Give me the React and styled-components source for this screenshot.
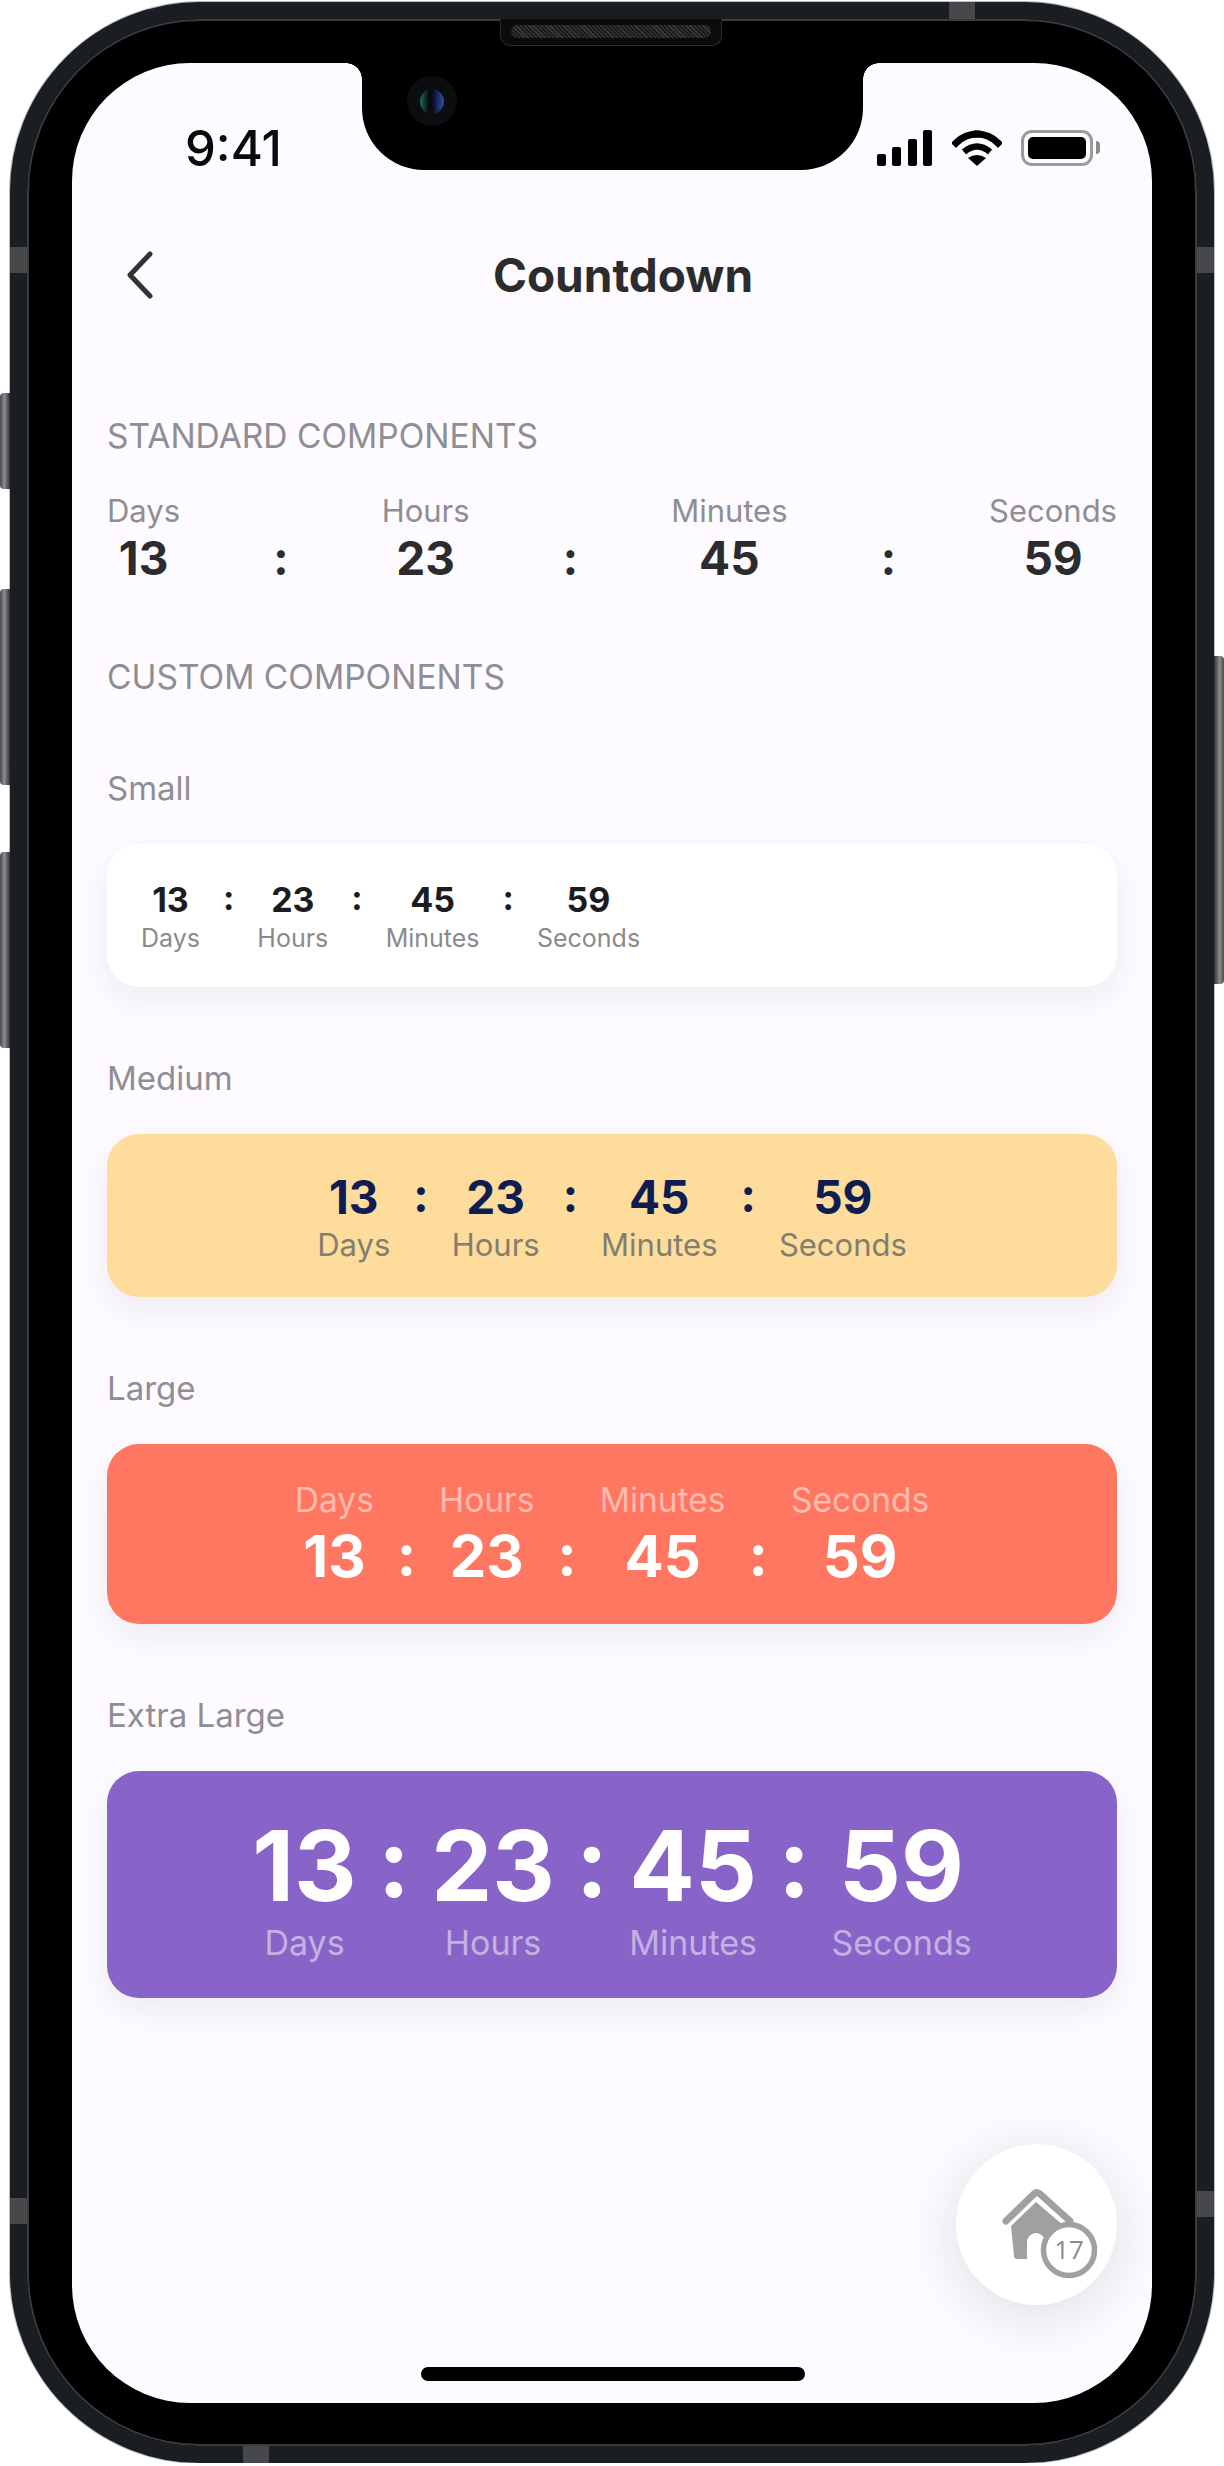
import React from 'react'
import styled, { createGlobalStyle, css } from 'styled-components'

const UNITS = [
  ['Days', '13'],
  ['Hours', '23'],
  ['Minutes', '45'],
  ['Seconds', '59'],
]

const SIZES = {
  standard: { num: 46, label: 31, numLh: 54, labelLh: 40, gap: 0, lift: 0, numColor: '#2c2c2e', labelColor: '#8e8e93' },
  small: { num: 34, label: 25, numLh: 44, labelLh: 32, gap: 23, lift: 2, numColor: '#1c1c1e', labelColor: '#8a8a8e' },
  medium: { num: 46, label: 31, numLh: 57, labelLh: 37, gap: 23, lift: 2, numColor: '#0f1d52', labelColor: '#827f70' },
  large: { num: 58, label: 33.5, numLh: 68, labelLh: 44, gap: 23, lift: 2, numColor: '#ffffff', labelColor: 'rgba(255,255,255,.5)' },
  xlarge: { num: 97, label: 34, numLh: 116, labelLh: 38, gap: 21, lift: 4, numColor: '#ffffff', labelColor: 'rgba(255,255,255,.5)' },
}

function Timer({ size, labelsFirst }) {
  const s = SIZES[size]
  return (
    <TimerRow $gap={s.gap} $labelsFirst={labelsFirst}>
      {UNITS.map(([label, value], i) => (
        <React.Fragment key={label}>
          {i > 0 && <Colon $s={s}>:</Colon>}
          <Unit $labelsFirst={labelsFirst}>
            <Value $s={s}>{value}</Value>
            <Label $s={s}>{label}</Label>
          </Unit>
        </React.Fragment>
      ))}
    </TimerRow>
  )
}

function HomeIcon() {
  return (
    <svg width="120" height="110" viewBox="0 0 120 110">
      <path d="M29 51 L57 24 Q60 21 63 24 L93 51" fill="none" stroke="#a0a0a0" strokeWidth="7" strokeLinecap="round" strokeLinejoin="round" />
      <path d="M59 32 L86 55 L86 89 L68 89 L68 72 A9 9 0 0 0 50 72 L50 89 L40 89 Q37 89 37 86 L34 56 Z" fill="#a0a0a0" />
      <circle cx="92" cy="80" r="25.500" fill="#fff" stroke="#a0a0a0" strokeWidth="5.500" />
      <text x="92" y="89" textAnchor="middle" fontFamily="'Open Sans', sans-serif" fontSize="26" fill="#8a8a8a">17</text>
    </svg>
  )
}

function App() {
  return (
    <>
      <GlobalStyle />
      <Device>
        <ButtonRail $side="left">
          <SideButton $side="left" $height={96} $apart />
          <SideButton $side="left" $height={196} />
          <SideButton $side="left" $height={196} />
        </ButtonRail>
        <ButtonRail $side="right">
          <SideButton $side="right" $height={328} />
        </ButtonRail>
        <BandMark $side="left" $upper />
        <BandMark $side="left" />
        <BandMark $side="right" $upper />
        <BandMark $side="right" />
        <BandMark $side="top" />
        <BandMark $side="bottom" />
        <Speaker><Grill /></Speaker>
        <Screen>
          <Notch>
            <CornerLeft />
            <CornerRight />
            <Camera />
          </Notch>
          <StatusBar>
            <Clock>9:41</Clock>
            <StatusIcons>
              <svg width="56" height="36" viewBox="0 0 56 36">
                <rect x="0" y="24" width="9" height="12" rx="2" />
                <rect x="15" y="17" width="9" height="19" rx="2" />
                <rect x="31" y="9" width="9" height="27" rx="2" />
                <rect x="46" y="0" width="9" height="36" rx="2" />
              </svg>
              <svg width="50" height="38" viewBox="0 0 50 38">
                <path d="M25 5 C 34 5 41 9 46 14" fill="none" stroke="#000" strokeWidth="7" strokeLinecap="square" />
                <path d="M25 5 C 16 5 9 9 4 14" fill="none" stroke="#000" strokeWidth="7" strokeLinecap="square" />
                <path d="M12 23 Q25 12 38 23" fill="none" stroke="#000" strokeWidth="6.500" />
                <path d="M25 37 L16 29 Q25 23 34 29 Z" />
              </svg>
              <Battery><BatteryFill /></Battery>
            </StatusIcons>
          </StatusBar>
          <NavBar>
            <BackIcon width="28" height="48" viewBox="0 0 28 48">
              <path d="M24 3 L4 24 L24 45" fill="none" stroke="#333" strokeWidth="5" strokeLinecap="round" strokeLinejoin="round" />
            </BackIcon>
            <Title>Countdown</Title>
          </NavBar>
          <SectionTitle $first>STANDARD COMPONENTS</SectionTitle>
          <StandardRow>
            <Timer size="standard" labelsFirst />
          </StandardRow>
          <SectionTitle>CUSTOM COMPONENTS</SectionTitle>
          <Groups>
            <Group>
              <Caption>Small</Caption>
              <Card $bg="#ffffff" $height={143}>
                <SmallInset><Timer size="small" /></SmallInset>
              </Card>
            </Group>
            <Group>
              <Caption>Medium</Caption>
              <Card $bg="#fddc9c" $height={163}>
                <Timer size="medium" />
              </Card>
            </Group>
            <Group>
              <Caption>Large</Caption>
              <Card $bg="#ff7760" $height={180}>
                <Timer size="large" labelsFirst />
              </Card>
            </Group>
            <Group>
              <Caption>Extra Large</Caption>
              <Card $bg="#8864c8" $height={227}>
                <Timer size="xlarge" />
              </Card>
            </Group>
          </Groups>
          <Fab><HomeIcon /></Fab>
          <HomeIndicator />
        </Screen>
      </Device>
    </>
  )
}

const GlobalStyle = createGlobalStyle`
  html, body {
    margin: 0;
    padding: 0;
    background: #ffffff;
  }
  body {
    font-family: Inter, "Liberation Sans", sans-serif;
  }
`

const Device = styled.div`
  position: relative;
  box-sizing: border-box;
  width: 1204px;
  height: 2461px;
  margin: 2px 0 0 10px;
  padding: 44px 45px;
  background: #000;
  border: 17px solid #1a1d22;
  border-radius: 190px;
  box-shadow: 0 0 0 1px #b9bcc0, inset 0 0 0 2px #3a3b3d;
`

const ButtonRail = styled.div`
  position: absolute;
  ${p => (p.$side === 'left' ? 'left: -27px; top: 374px;' : 'right: -27px; top: 637px;')}
  display: flex;
  flex-direction: column;
  gap: 67px;
`

const SideButton = styled.div`
  width: 10px;
  height: ${p => p.$height}px;
  margin-bottom: ${p => (p.$apart ? '33px' : '0')};
  background: linear-gradient(${p => (p.$side === 'left' ? '90deg' : '270deg')}, #4a4a4c, #8b8b8d 45%, #2c2c2e);
  border-radius: ${p => (p.$side === 'left' ? '4px 0 0 4px' : '0 4px 4px 0')};
`

const bandSpots = {
  left: p => `left: -17px; width: 17px; height: 26px; top: ${p.$upper ? '228px' : '2179px'};`,
  right: p => `right: -17px; width: 17px; height: 26px; top: ${p.$upper ? '228px' : '2172px'};`,
  top: () => 'top: -17px; left: 922px; width: 26px; height: 17px;',
  bottom: () => 'bottom: -17px; left: 216px; width: 26px; height: 17px;',
}

const BandMark = styled.div`
  position: absolute;
  ${p => bandSpots[p.$side](p)}
  background: #47484a;
`

const Speaker = styled.div`
  position: absolute;
  z-index: 3;
  top: 0;
  left: 473px;
  box-sizing: border-box;
  width: 222px;
  height: 27px;
  padding: 6px 10px 0;
  background: #0b0b0c;
  border: 1px solid #2b2b2d;
  border-top: none;
  border-radius: 0 0 10px 10px;
`

const Grill = styled.div`
  height: 13px;
  border-radius: 7px;
  background: repeating-linear-gradient(45deg, #3a3a3c 0 1px, #1e1e20 1px 3px);
`

const Screen = styled.div`
  position: relative;
  box-sizing: border-box;
  width: 1080px;
  height: 2340px;
  padding: 0 35px;
  background: #fdfbff;
  border-radius: 118px;
  overflow: hidden;
`

const Notch = styled.div`
  position: absolute;
  top: 0;
  left: 290px;
  width: 501px;
  height: 107px;
  background: #000;
  border-radius: 0 0 62px 62px;
`

const corner = css`
  position: absolute;
  top: 0;
  width: 16px;
  height: 16px;
`

const CornerLeft = styled.div`
  ${corner}
  left: -16px;
  background: radial-gradient(circle at 0 100%, transparent 15.500px, #000 16px);
`

const CornerRight = styled.div`
  ${corner}
  right: -16px;
  background: radial-gradient(circle at 100% 100%, transparent 15.500px, #000 16px);
`

const Camera = styled.div`
  position: absolute;
  top: 13px;
  left: 45px;
  display: flex;
  align-items: center;
  justify-content: center;
  width: 50px;
  height: 50px;
  border-radius: 50%;
  background: #0d0d10;

  &::after {
    content: '';
    width: 24px;
    height: 25px;
    border-radius: 50%;
    background: linear-gradient(90deg, #1d6a62, #05090c 38%, #0a0f22 55%, #2f4fae);
  }
`

const StatusBar = styled.div`
  display: flex;
  justify-content: space-between;
  align-items: center;
  height: 50px;
  margin: 60px 0 0 78px;
  padding-right: 24px;
`

const Clock = styled.div`
  padding-top: 2px;
  font-size: 49px;
  font-weight: 500;
  line-height: 50px;
  color: #0a0a0a;
`

const StatusIcons = styled.div`
  display: flex;
  align-items: center;
  gap: 19px;
`

const Battery = styled.div`
  position: relative;
  box-sizing: border-box;
  width: 72px;
  height: 36px;
  padding: 4px;
  border: 3px solid #9b9b9b;
  border-radius: 11px;

  &::after {
    content: '';
    position: absolute;
    top: 8px;
    right: -10px;
    width: 4px;
    height: 13px;
    background: #8a8a8a;
    border-radius: 0 4px 4px 0;
  }
`

const BatteryFill = styled.div`
  width: 100%;
  height: 100%;
  background: #000;
  border-radius: 5px;
`

const NavBar = styled.div`
  position: relative;
  display: flex;
  justify-content: center;
  align-items: center;
  height: 64px;
  margin-top: 70px;
  padding-left: 22px;
`

const BackIcon = styled.svg`
  position: absolute;
  left: 19px;
  top: 8px;
`

const Title = styled.h1`
  margin: 0;
  font-size: 46px;
  font-weight: 700;
  line-height: 64px;
  color: #2c2c2e;
`

const SectionTitle = styled.h2`
  margin: ${p => (p.$first ? '109px' : '72px')} 0 0;
  font-size: 33.500px;
  font-weight: 400;
  line-height: 40px;
  color: #8e8e93;
`

const StandardRow = styled.div`
  margin-top: 35px;
`

const Groups = styled.div`
  display: flex;
  flex-direction: column;
  gap: 71px;
  margin-top: 71px;
`

const Group = styled.section`
  display: flex;
  flex-direction: column;
  gap: 36px;
`

const Caption = styled.div`
  font-size: 33px;
  line-height: 40px;
  color: #8e8e93;
`

const Card = styled.div`
  display: flex;
  align-items: center;
  justify-content: center;
  height: ${p => p.$height}px;
  background: ${p => p.$bg};
  border-radius: 32px;
  box-shadow: 0 12px 34px rgba(40, 30, 60, 0.07);
`

const SmallInset = styled.div`
  width: 100%;
  padding-left: 34px;
`

const TimerRow = styled.div`
  display: flex;
  align-items: ${p => (p.$labelsFirst ? 'flex-end' : 'flex-start')};
  ${p => (p.$gap ? `gap: ${p.$gap}px;` : 'justify-content: space-between;')}
`

const Unit = styled.div`
  display: flex;
  flex-direction: ${p => (p.$labelsFirst ? 'column-reverse' : 'column')};
  align-items: center;
`

const Value = styled.div`
  font-size: ${p => p.$s.num}px;
  font-weight: 700;
  line-height: ${p => p.$s.numLh}px;
  color: ${p => p.$s.numColor};
`

const Label = styled.div`
  font-size: ${p => p.$s.label}px;
  font-weight: 400;
  line-height: ${p => p.$s.labelLh}px;
  color: ${p => p.$s.labelColor};
`

const Colon = styled.div`
  font-size: ${p => p.$s.num}px;
  font-weight: 700;
  line-height: ${p => p.$s.numLh}px;
  color: ${p => p.$s.numColor};
  transform: translateY(-${p => p.$s.lift}px);
`

const Fab = styled.div`
  position: absolute;
  right: 35px;
  bottom: 98px;
  display: flex;
  align-items: center;
  justify-content: center;
  width: 161px;
  height: 161px;
  background: #ffffff;
  border-radius: 50%;
  box-shadow: 0 10px 60px rgba(30, 20, 40, 0.13);
`

const HomeIndicator = styled.div`
  position: absolute;
  bottom: 22px;
  left: 349px;
  width: 384px;
  height: 14px;
  background: #000;
  border-radius: 7px;
`

export default App
